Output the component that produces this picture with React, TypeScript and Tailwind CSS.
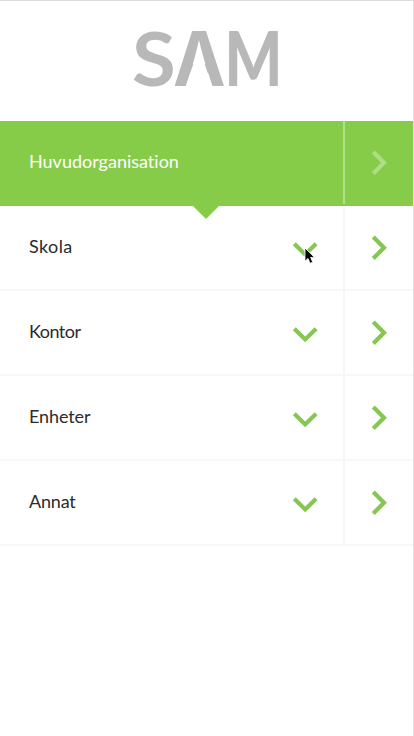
import * as React from "react";

const items = [
  { name: "Skola", tracking: "tracking-[0.4px]" },
  { name: "Kontor", tracking: "tracking-[-0.5px]" },
  { name: "Enheter", tracking: "tracking-[-0.1px]" },
  { name: "Annat", tracking: "tracking-[-0.2px]" },
];

function Logo() {
  return (
    <svg
      width="174"
      height="100"
      viewBox="0 0 174 100"
      fill="#b8b8b8"
      aria-label="SAM"
      className="block overflow-visible font-['Lato',sans-serif] text-[76px]"
    >
      <text transform="translate(12 84.5) scale(1.05 0.97)" className="font-bold">S</text>
      <text transform="translate(53 85) scale(0.94 1)" className="font-['Inter',sans-serif] text-[75px] font-bold">A</text>
      {/* the A has no crossbar */}
      <polygon points="79,47 65.3,86 92.7,86" fill="#fff" />
      <text transform="translate(104.5 85) scale(0.8 1)" className="font-black">M</text>
    </svg>
  );
}

function ChevronRight({ className }: { className: string }) {
  return (
    <svg width="16" height="26" viewBox="0 0 16 26" fill="none" strokeWidth="4.2" stroke="currentColor" className={className}>
      <path d="M2.3 2 L13 12.7 L2.3 23.4" />
    </svg>
  );
}

function ChevronDown() {
  return (
    <svg width="26" height="16" viewBox="0 0 26 16" fill="none" strokeWidth="4.2" stroke="currentColor" className="block text-[#86c652]">
      <path d="M2.3 1.7 L13.2 12.4 L24.1 1.7" />
    </svg>
  );
}

function Pointer() {
  return (
    <svg width="12" height="18" viewBox="0 0 12 18" className="absolute top-[5px] left-[12px]">
      <path
        d="M1 1 V14.2 L4 11.4 L6.1 16.3 L8.7 15.2 L6.6 10.4 H10.5 Z"
        fill="#000"
        stroke="#fff"
        strokeWidth="0.8"
      />
    </svg>
  );
}

export default function App() {
  return (
    <div className="h-[736px] w-[414px] border-t border-r border-t-[#dcdcdc] border-r-[#e2e2e2] bg-white font-['Lato',sans-serif] text-[18px] text-[#2b2b2b]">
      <header className="flex h-[120px] items-start pl-[120px]">
        <Logo />
      </header>

      <div className="relative flex h-[85px] bg-[#86cc49] text-white">
        <div className="flex flex-1 items-center pb-[5px] pl-[29px] [font-variant-ligatures:none]">
          Huvudorganisation
        </div>
        <div className="h-[83px] w-[2px] bg-[#b1de89]" />
        <div className="flex w-[68px] items-center pb-[2px] pl-[26px]">
          <ChevronRight className="text-[#aedd87]" />
        </div>
        <svg width="26" height="13" viewBox="0 0 26 13" className="absolute top-full left-[193px]">
          <path d="M0 0 H26 L13 13 Z" fill="#86cc49" />
        </svg>
      </div>

      {items.map((item, idx) => (
        <div key={item.name} className="flex h-[85px] border-b-2 border-[#f7f7f7]">
          <div className="flex flex-1 items-center justify-between pr-[25px] pl-[29px]">
            <span className={`pb-[3px] ${item.tracking}`}>{item.name}</span>
            <div className="relative mt-[4px]">
              <ChevronDown />
              {idx === 0 && <Pointer />}
            </div>
          </div>
          <div className="flex w-[70px] items-center border-l-2 border-[#f7f7f7] pl-[26px]">
            <ChevronRight className="text-[#86c652]" />
          </div>
        </div>
      ))}
    </div>
  );
}
